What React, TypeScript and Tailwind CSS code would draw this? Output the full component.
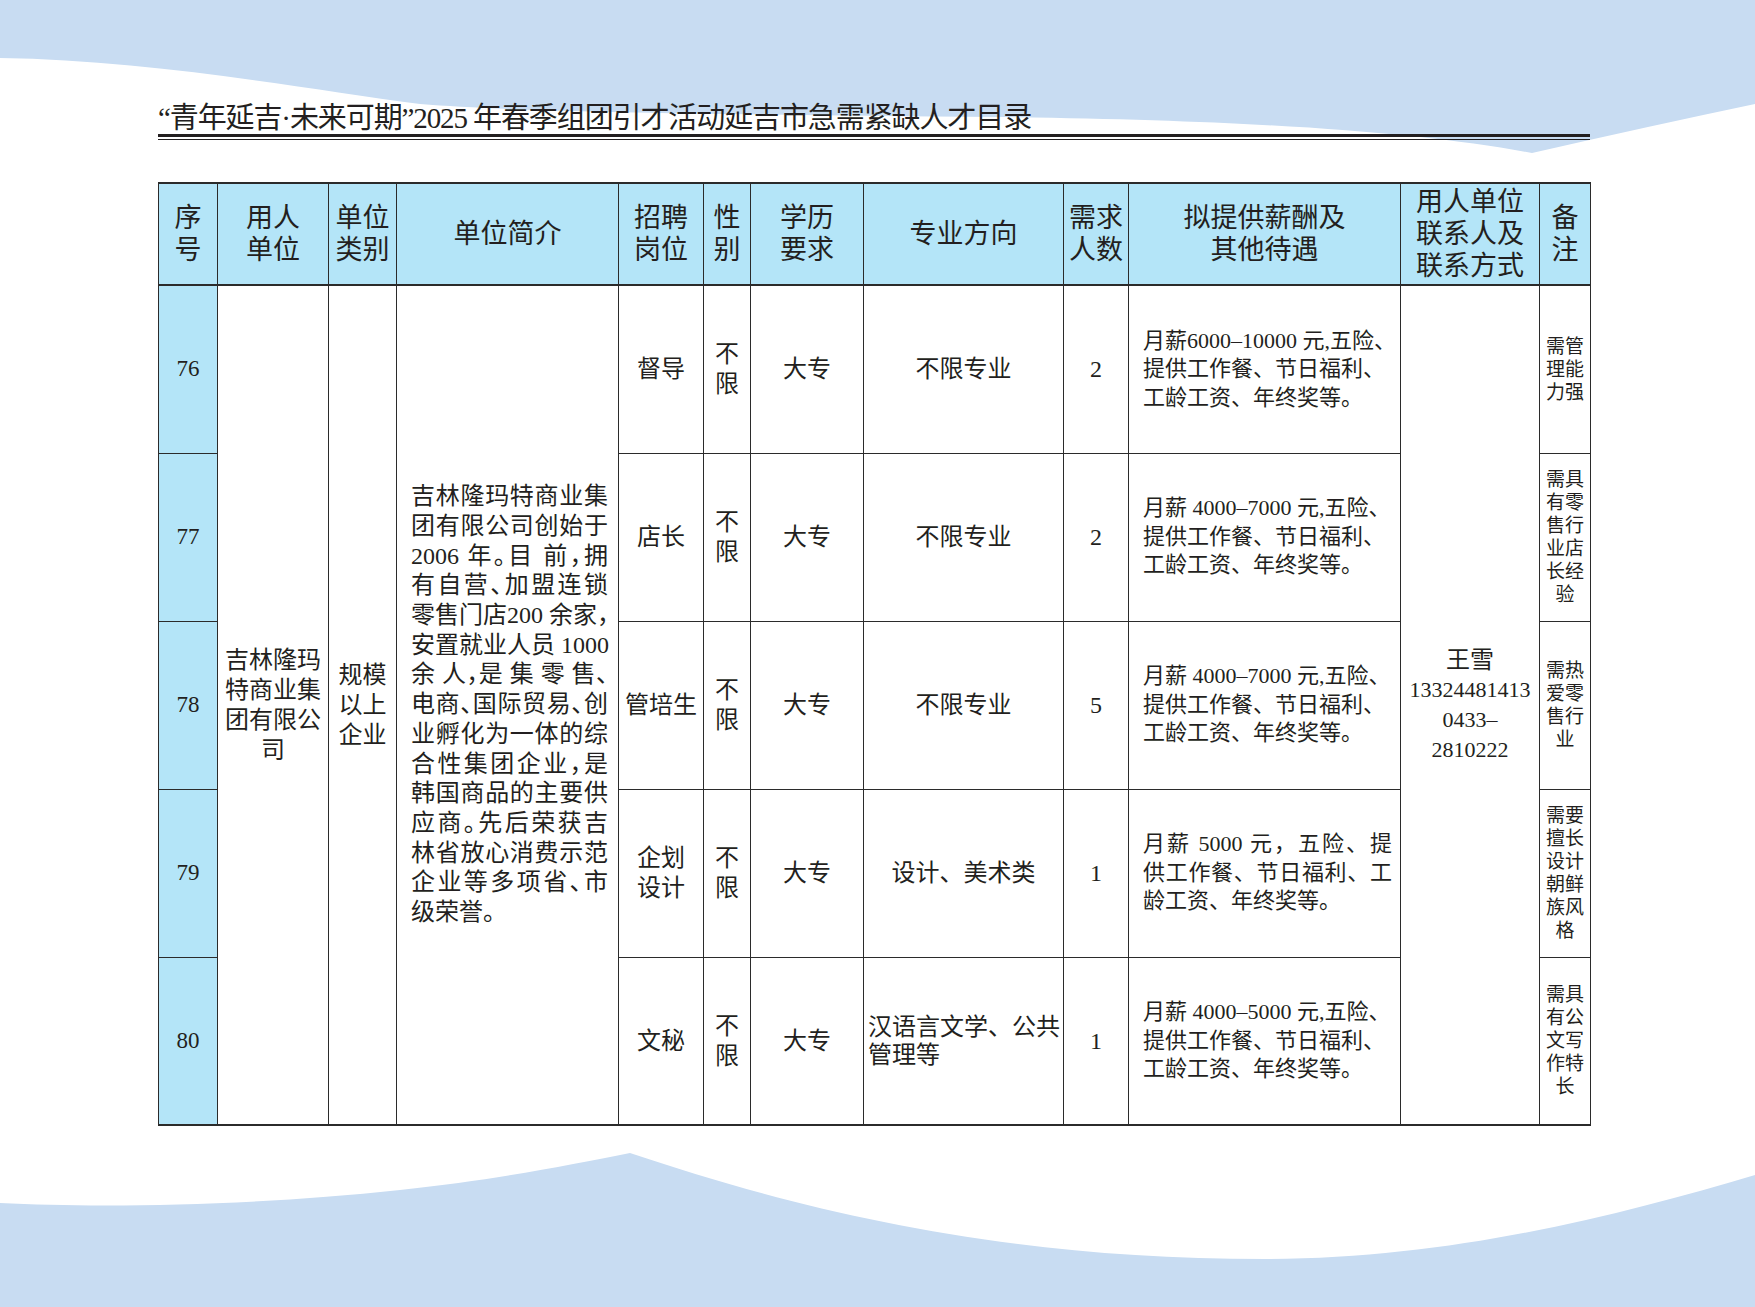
import React from "react";

const FONT = "font-['Liberation_Serif','Noto_Sans_CJK_SC',serif]";

const HEAD: string[][] = [
  ["序", "号"],
  ["用人", "单位"],
  ["单位", "类别"],
  ["单位简介"],
  ["招聘", "岗位"],
  ["性", "别"],
  ["学历", "要求"],
  ["专业方向"],
  ["需求", "人数"],
  ["拟提供薪酬及", "其他待遇"],
  ["用人单位", "联系人及", "联系方式"],
  ["备", "注"],
];

const DESC = [
  "吉林隆玛特商业集",
  "团有限公司创始于",
  "2006 年。目 前，拥",
  "有自营、加盟连锁",
  "零售门店200 余家，",
  "安置就业人员 1000",
  "余 人，是 集 零 售、",
  "电商、国际贸易、创",
  "业孵化为一体的综",
  "合性集团企业，是",
  "韩国商品的主要供",
  "应商。先后荣获吉",
  "林省放心消费示范",
  "企业等多项省、市",
  "级荣誉。",
];

const PAY_TAIL = ["提供工作餐、节日福利、", "工龄工资、年终奖等。"];

type Row = {
  no: string;
  pos: string[];
  major: string[];
  majorLeft?: boolean;
  n: string;
  pay: string[];
  payJustify?: boolean;
  note: string[];
};

const ROWS: Row[] = [
  { no: "76", pos: ["督导"], major: ["不限专业"], n: "2", pay: ["月薪6000–10000 元,五险、", ...PAY_TAIL], note: ["需管", "理能", "力强"] },
  { no: "77", pos: ["店长"], major: ["不限专业"], n: "2", pay: ["月薪 4000–7000 元,五险、", ...PAY_TAIL], note: ["需具", "有零", "售行", "业店", "长经", "验"] },
  { no: "78", pos: ["管培生"], major: ["不限专业"], n: "5", pay: ["月薪 4000–7000 元,五险、", ...PAY_TAIL], note: ["需热", "爱零", "售行", "业"] },
  {
    no: "79",
    pos: ["企划", "设计"],
    major: ["设计、美术类"],
    n: "1",
    pay: ["月薪 5000 元，五险、提", "供工作餐、节日福利、工", "龄工资、年终奖等。"],
    payJustify: true,
    note: ["需要", "擅长", "设计", "朝鲜", "族风", "格"],
  },
  {
    no: "80",
    pos: ["文秘"],
    major: ["汉语言文学、公共", "管理等"],
    majorLeft: true,
    n: "1",
    pay: ["月薪 4000–5000 元,五险、", ...PAY_TAIL],
    note: ["需具", "有公", "文写", "作特", "长"],
  },
];

const WIDTHS = [59, 111, 68, 222, 85, 47, 113, 200, 65, 272, 139, 51];

const cell = "border border-[#2b2b2b] p-0 align-middle";

function Lines({ lines }: { lines: string[] }) {
  return (
    <>
      {lines.map((l, i) => (
        <div key={i} className="whitespace-nowrap">
          {l}
        </div>
      ))}
    </>
  );
}

export default function App() {
  return (
    <div className={`relative w-[1755px] h-[1307px] overflow-hidden bg-white text-[#231f20] ${FONT}`}>
      {/* background waves */}
      <svg className="absolute inset-0" width="1755" height="1307" viewBox="0 0 1755 1307">
        <path
          d="M0 0H1755V104Q1650 126 1532 153C1420 132 1250 120 1000 117C700 114 520 112 420 104C300 88 150 60 0 58Z"
          fill="#c8dcf2"
        />
        <path
          d="M0 1203C100 1208 250 1206 400 1190C500 1179 570 1165 630 1153C800 1210 1000 1259 1265 1259C1450 1259 1620 1215 1755 1175V1307H0Z"
          fill="#c8dcf2"
        />
      </svg>

      <div className="relative pl-[158px] pt-[103px]">
        <div className="w-[1432px]">
          <div className="h-[31px] text-[29px] leading-[31px] tracking-[-1.1px] whitespace-nowrap">
            “青年延吉·未来可期”2025 年春季组团引才活动延吉市急需紧缺人才目录
          </div>
          <div className="h-[3px] bg-[#231f20]" />
          <div className="mt-[2px] h-px bg-[#231f20]" />

          <table className="mt-[42px] w-[1432px] table-fixed border-collapse border-y-2 border-[#2b2b2b] bg-white">
            <colgroup>
              {WIDTHS.map((w, i) => (
                <col key={i} style={{ width: w }} />
              ))}
            </colgroup>
            <thead>
              <tr>
                {HEAD.map((h, i) => (
                  <th
                    key={i}
                    className={`${cell} border-b-2 h-[102px] bg-[#b4e5f8] text-center text-[27px] leading-[32px] font-normal`}
                  >
                    <Lines lines={h} />
                  </th>
                ))}
              </tr>
            </thead>
            <tbody>
              {ROWS.map((r, i) => (
                <tr key={r.no}>
                  <td className={`${cell} h-[168px] bg-[#b4e5f8] text-center text-[23px]`}>{r.no}</td>
                  {i === 0 && (
                    <>
                      <td rowSpan={5} className={`${cell} text-center text-[24px] leading-[30px]`}>
                        <Lines lines={["吉林隆玛", "特商业集", "团有限公", "司"]} />
                      </td>
                      <td rowSpan={5} className={`${cell} text-center text-[24px] leading-[30px]`}>
                        <Lines lines={["规模", "以上", "企业"]} />
                      </td>
                      <td rowSpan={5} className={`${cell} pl-[14px] pr-[10px] text-[24px] leading-[29.7px]`}>
                        {DESC.map((l, k) => (
                          <div
                            key={k}
                            className={`whitespace-nowrap [font-feature-settings:'halt'] ${
                              k < DESC.length - 1 ? "text-justify [text-align-last:justify]" : ""
                            }`}
                          >
                            {l}
                          </div>
                        ))}
                      </td>
                    </>
                  )}
                  <td className={`${cell} text-center text-[24px] leading-[30px]`}>
                    <Lines lines={r.pos} />
                  </td>
                  <td className={`${cell} text-center text-[24px] leading-[30px]`}>
                    <Lines lines={["不", "限"]} />
                  </td>
                  <td className={`${cell} text-center text-[24px]`}>大专</td>
                  <td
                    className={`${cell} text-[24px] leading-[28px] ${
                      r.majorLeft ? "text-left px-[4px]" : "text-center"
                    }`}
                  >
                    <Lines lines={r.major} />
                  </td>
                  <td className={`${cell} text-center text-[24px]`}>{r.n}</td>
                  <td className={`${cell} pl-[14px] pr-[8px] text-[22px] leading-[28.5px]`}>
                    {r.pay.map((l, k) => (
                      <div
                        key={k}
                        className={`whitespace-nowrap ${
                          r.payJustify && k < r.pay.length - 1 ? "text-justify [text-align-last:justify]" : ""
                        }`}
                      >
                        {l}
                      </div>
                    ))}
                  </td>
                  {i === 0 && (
                    <td rowSpan={5} className={`${cell} text-center leading-[30px]`}>
                      <div className="text-[24px]">王雪</div>
                      <div className="text-[22px]">13324481413</div>
                      <div className="text-[22px]">0433–</div>
                      <div className="text-[22px]">2810222</div>
                    </td>
                  )}
                  <td className={`${cell} text-center text-[19px] leading-[23px]`}>
                    <Lines lines={r.note} />
                  </td>
                </tr>
              ))}
            </tbody>
          </table>
        </div>
      </div>
    </div>
  );
}
